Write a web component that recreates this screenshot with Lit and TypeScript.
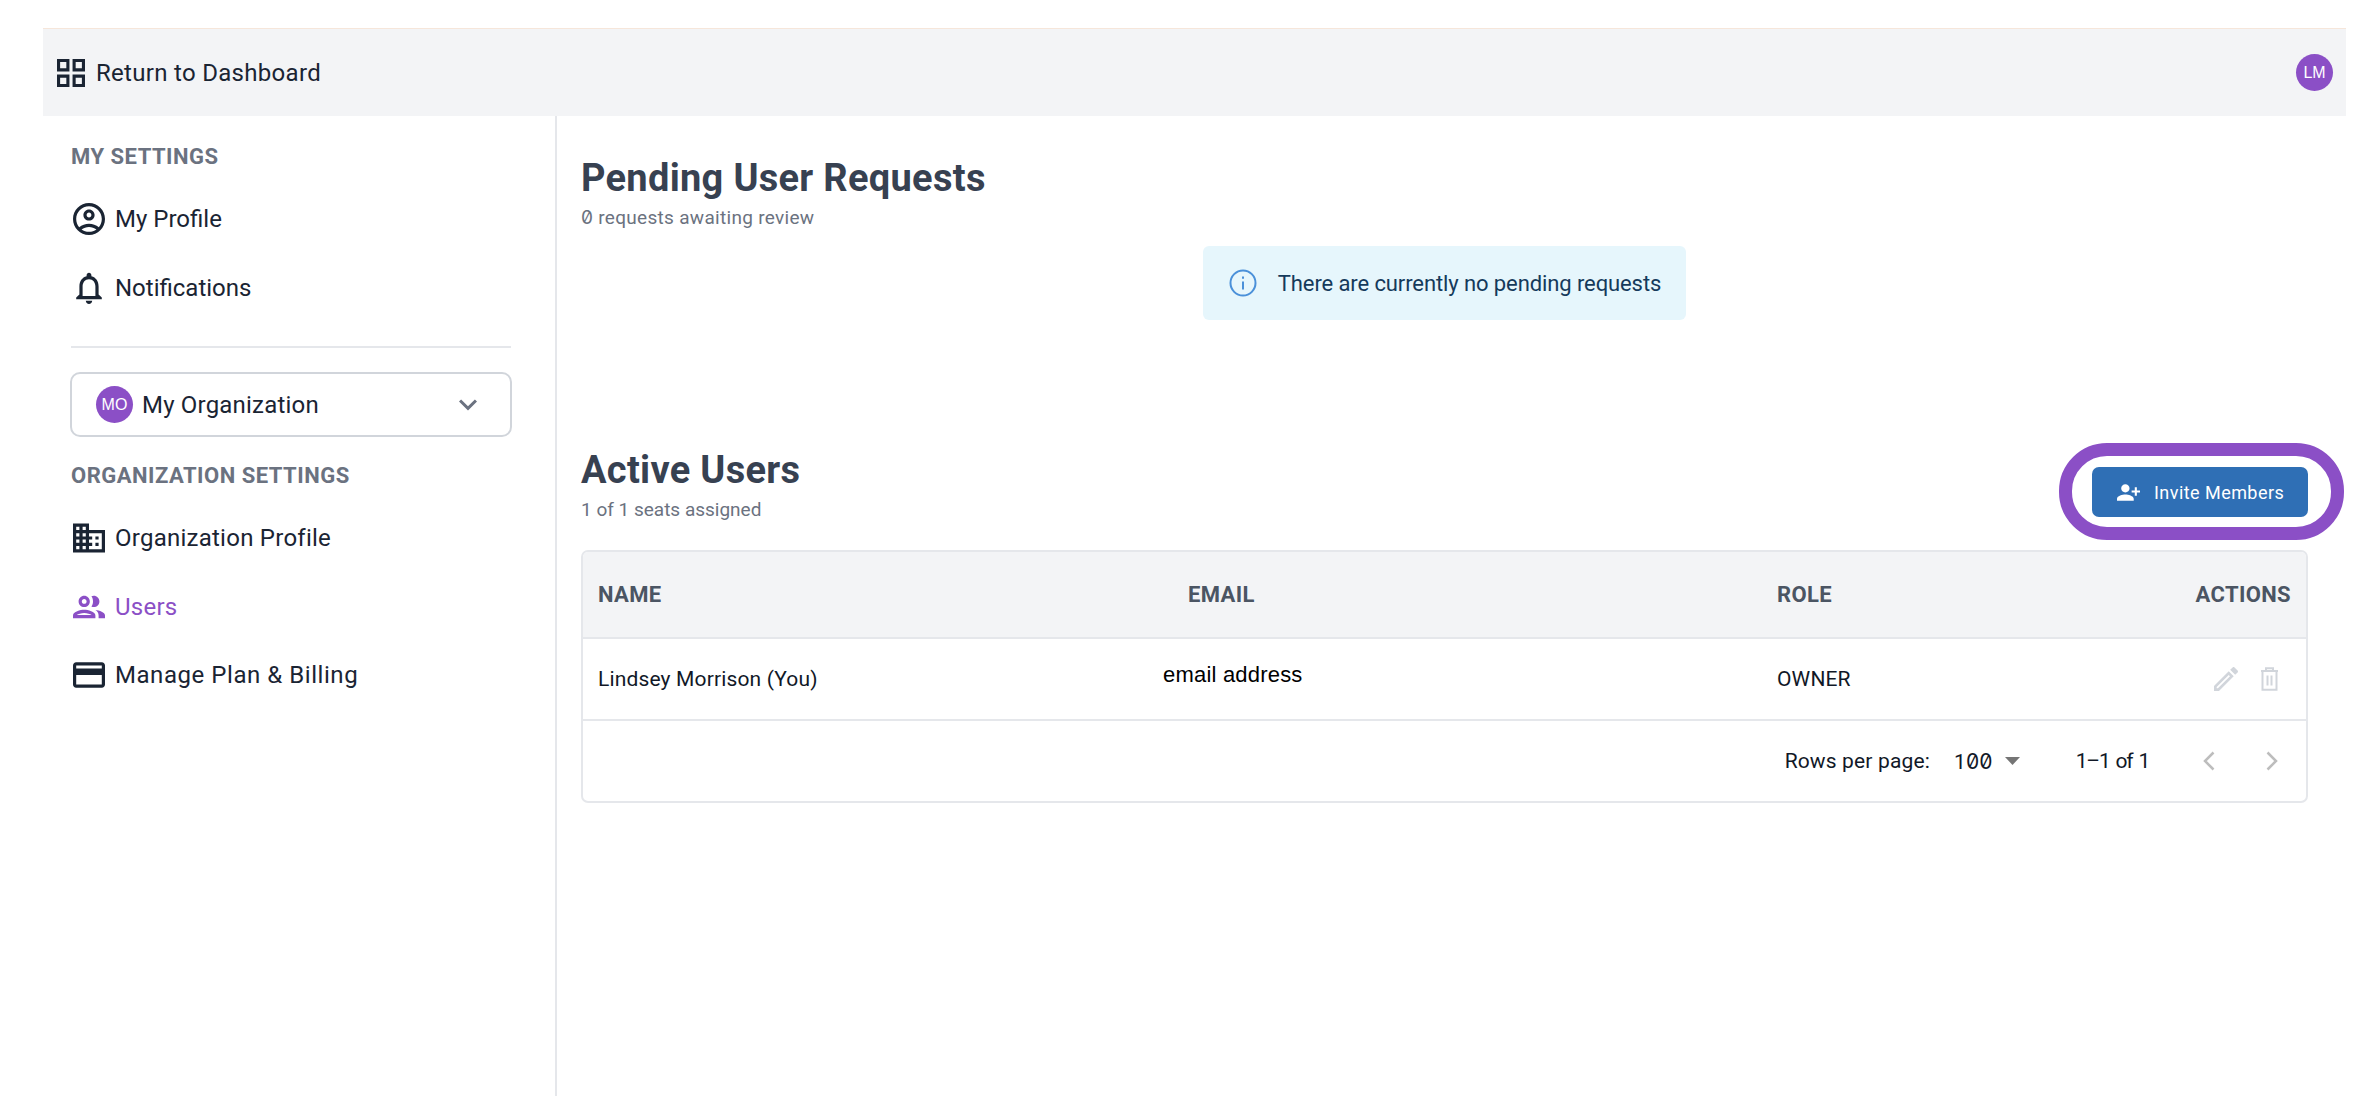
import { LitElement, css, html, svg } from "lit";
import { customElement } from "lit/decorators.js";

const icon = (box: string, d: string, cls = "") =>
  html`<svg class="icon ${cls}" viewBox=${box} fill="currentColor">${svg`<path d=${d}></path>`}</svg>`;

const paths = {
  grid: "M3 3v8h8V3H3zm6 6H5V5h4v4zm-6 4v8h8v-8H3zm6 6H5v-4h4v4zm4-16v8h8V3h-8zm6 6h-4V5h4v4zm-6 4v8h8v-8h-8zm6 6h-4v-4h4v4z",
  profile:
    "M12 2C6.48 2 2 6.48 2 12s4.48 10 10 10 10-4.48 10-10S17.52 2 12 2zM7.35 18.5C8.66 17.56 10.26 17 12 17s3.34.56 4.65 1.5c-1.31.94-2.91 1.5-4.65 1.5s-3.34-.56-4.65-1.5zm10.79-1.38C16.45 15.8 14.32 15 12 15s-4.45.8-6.14 2.12C4.7 15.73 4 13.95 4 12c0-4.42 3.58-8 8-8s8 3.58 8 8c0 1.95-.7 3.73-1.86 5.12zM12 6c-1.93 0-3.5 1.57-3.5 3.5S10.07 13 12 13s3.5-1.57 3.5-3.5S13.93 6 12 6zm0 5c-.83 0-1.5-.67-1.5-1.5S11.17 8 12 8s1.5.67 1.5 1.5S12.83 11 12 11z",
  bell: "M12 22c1.1 0 2-.9 2-2h-4c0 1.1.9 2 2 2zm6-6v-5c0-3.07-1.63-5.64-4.5-6.32V4c0-.83-.67-1.5-1.5-1.5s-1.5.67-1.5 1.5v.68C7.64 5.36 6 7.92 6 11v5l-2 2v1h16v-1l-2-2zm-2 1H8v-6c0-2.48 1.51-4.5 4-4.5s4 2.02 4 4.5v6z",
  domain:
    "M12 7V3H2v18h20V7H12zM6 19H4v-2h2v2zm0-4H4v-2h2v2zm0-4H4V9h2v2zm0-4H4V5h2v2zm4 12H8v-2h2v2zm0-4H8v-2h2v2zm0-4H8V9h2v2zm0-4H8V5h2v2zm10 12h-8v-2h2v-2h-2v-2h2v-2h-2V9h8v10zm-2-8h-2v2h2v-2zm0 4h-2v2h2v-2z",
  people:
    "M9 13.75c-2.34 0-7 1.17-7 3.5V19h14v-1.75c0-2.33-4.66-3.5-7-3.5zM4.34 17c.84-.58 2.87-1.25 4.66-1.25s3.82.67 4.66 1.25H4.34zM9 12c1.93 0 3.5-1.57 3.5-3.5S10.93 5 9 5 5.5 6.57 5.5 8.5 7.07 12 9 12zm0-5c.83 0 1.5.67 1.5 1.5S9.83 10 9 10s-1.5-.67-1.5-1.5S8.17 7 9 7zm7.04 6.81c1.16.84 1.96 1.96 1.96 3.44V19h4v-1.75c0-2.02-3.5-3.17-5.96-3.44zM15 12c1.93 0 3.5-1.57 3.5-3.5S16.93 5 15 5c-.54 0-1.04.13-1.5.35.63.89 1 1.98 1 3.15s-.37 2.26-1 3.15c.46.22.96.35 1.5.35z",
  card: "M20 4H4c-1.11 0-1.99.89-1.99 2L2 18c0 1.11.89 2 2 2h16c1.11 0 2-.89 2-2V6c0-1.11-.89-2-2-2zm0 14H4v-6h16v6zm0-10H4V6h16v2z",
  personAdd:
    "M15 12c2.21 0 4-1.79 4-4s-1.79-4-4-4-4 1.79-4 4 1.79 4 4 4zm-9-2V7H4v3H1v2h3v3h2v-3h3v-2H6zm9 4c-2.67 0-8 1.34-8 4v2h16v-2c0-2.66-5.33-4-8-4z",
  pencil:
    "M14.06 9.02l.92.92L5.92 19H5v-.92l9.06-9.06M17.66 3c-.25 0-.51.1-.7.29l-1.83 1.83 3.75 3.75 1.83-1.83c.39-.39.39-1.02 0-1.41l-2.34-2.34c-.2-.2-.45-.29-.71-.29zm-3.6 3.19L3 17.25V21h3.75L17.81 9.94l-3.75-3.75z",
};

const personal = [
  { label: "My Profile", d: paths.profile, cls: "tight" },
  { label: "Notifications", d: paths.bell, cls: "tight" },
];

const org = [
  { label: "Organization Profile", d: paths.domain, cls: "" },
  { label: "Users", d: paths.people, cls: "active" },
  { label: "Manage Plan & Billing", d: paths.card, cls: "wide" },
];

@customElement("app-root")
export class AppRoot extends LitElement {
  static styles = css`
    :host {
      display: block;
      font-family: Roboto, "Noto Sans", sans-serif;
      color: #1a2433;
    }
    .page {
      display: flex;
      flex-direction: column;
      box-sizing: border-box;
      min-height: 100vh;
      padding: 28px 22px 0 43px;
    }
    .icon {
      display: block;
      flex: none;
    }
    .zero {
      font-family: Inter, sans-serif;
      font-feature-settings: "zero";
    }

    .topbar {
      display: flex;
      align-items: center;
      justify-content: space-between;
      height: 87px;
      padding: 0 13px 0 14px;
      background: #f3f4f6;
      border-top: 1px solid #f6e6da;
    }
    .back {
      display: flex;
      align-items: center;
      gap: 11px;
      font-size: 24px;
      letter-spacing: 0.3px;
    }
    .back .icon {
      width: 28px;
      height: 28px;
    }
    .avatar {
      display: flex;
      align-items: center;
      justify-content: center;
      flex: none;
      width: 37px;
      height: 37px;
      border-radius: 50%;
      background: #8b4fc6;
      color: #fff;
      font: 500 16px "Liberation Sans", sans-serif;
      letter-spacing: 0;
    }

    .content {
      display: flex;
      flex: 1;
    }
    aside {
      box-sizing: border-box;
      flex: none;
      width: 514px;
      padding: 26px 44px 0 28px;
      border-right: 2px solid #e5e7eb;
    }
    .section {
      height: 30px;
      line-height: 30px;
      font-size: 22px;
      font-weight: 700;
      letter-spacing: 0.5px;
      color: #6b7280;
    }
    nav {
      margin-top: 13px;
    }
    .item {
      display: flex;
      align-items: center;
      gap: 10px;
      height: 68.5px;
      padding-left: 2px;
      font-size: 24px;
      letter-spacing: 0.25px;
    }
    .item .icon {
      width: 32px;
      height: 32px;
    }
    .item.tight {
      letter-spacing: 0;
    }
    .item.wide {
      letter-spacing: 0.55px;
    }
    .item.active {
      color: #8b4fc6;
    }
    .divider {
      height: 2px;
      margin-top: 24px;
      background: #e5e7eb;
    }
    .org-select {
      display: flex;
      align-items: center;
      gap: 9px;
      box-sizing: border-box;
      height: 65px;
      margin: 24px -1px;
      padding: 0 33px 0 24px;
      border: 2px solid #d1d5db;
      border-radius: 10px;
      font-size: 24px;
      letter-spacing: 0.2px;
    }
    .org-select span {
      flex: 1;
    }
    .chevron {
      width: 18px;
      height: 12px;
      color: #6b7280;
    }

    main {
      display: flex;
      flex-direction: column;
      flex: 1;
      min-width: 0;
      padding: 40px 38px 0 24px;
    }
    h2 {
      margin: 0;
      font-size: 38px;
      line-height: 44px;
      font-weight: 700;
      letter-spacing: 0.3px;
      color: #374151;
    }
    .sub {
      margin-top: 6px;
      font-size: 19px;
      line-height: 24px;
      color: #6b7280;
    }
    .sub.wide {
      letter-spacing: 0.3px;
    }
    .notice {
      display: flex;
      align-items: center;
      gap: 21px;
      align-self: center;
      box-sizing: border-box;
      height: 74px;
      margin-top: 16px;
      padding: 0 25px 0 26px;
      border-radius: 6px;
      background: #e6f6fc;
      font-size: 22px;
      letter-spacing: -0.1px;
      color: #153a5b;
    }
    .notice .icon {
      width: 28px;
      height: 28px;
      fill: none;
      stroke: #4a90d9;
      stroke-width: 2;
    }
    .users-head {
      display: flex;
      align-items: flex-start;
      justify-content: space-between;
      margin-top: 128px;
    }
    .invite-wrap {
      position: relative;
      margin-top: 19px;
    }
    .invite {
      display: flex;
      align-items: center;
      gap: 14px;
      box-sizing: border-box;
      width: 216px;
      height: 50px;
      padding: 0 0 0 25px;
      border: none;
      border-radius: 7px;
      background: #2f6fb5;
      color: #fff;
      font: 400 18px Roboto, sans-serif;
      letter-spacing: 0.45px;
    }
    .invite .icon {
      width: 23px;
      height: 17px;
    }
    .ring {
      position: absolute;
      top: -24px;
      right: -36px;
      bottom: -23px;
      left: -33px;
      border: 13px solid #8b4fc6;
      border-radius: 48px;
    }

    .table {
      margin-top: 28px;
      border: 2px solid #e5e7eb;
      border-radius: 7px;
      overflow: hidden;
    }
    .row {
      display: grid;
      grid-template-columns: 590px 589px 1fr auto;
      align-items: center;
      padding: 0 15px;
      border-bottom: 2px solid #e5e7eb;
    }
    .row.head {
      height: 85px;
      background: #f3f4f6;
      font-size: 22px;
      font-weight: 700;
      letter-spacing: 0.35px;
      color: #4b5563;
    }
    .row.body {
      height: 80px;
      font-size: 21px;
      letter-spacing: 0.15px;
      color: #111827;
    }
    .email {
      margin-left: -25px;
      padding-bottom: 8px;
      font: 22px "Liberation Sans", sans-serif;
      letter-spacing: 0.2px;
      color: #000;
    }
    .actions {
      display: flex;
      align-items: center;
      gap: 22px;
      padding-right: 12px;
      color: #d1d5db;
    }
    .actions .pencil {
      width: 24px;
      height: 24px;
    }
    .actions .trash {
      width: 19px;
      height: 24px;
      fill: none;
      stroke: currentColor;
      stroke-width: 2;
    }
    .pager {
      display: flex;
      align-items: center;
      justify-content: flex-end;
      height: 80px;
      padding-right: 28px;
      font-size: 21px;
      letter-spacing: 0.15px;
      color: #111827;
    }
    .rows-value {
      margin-left: 24px;
    }
    .caret {
      width: 15px;
      height: 8px;
      margin-left: 12px;
      fill: #757575;
    }
    .range {
      margin-left: 56px;
      letter-spacing: -1.2px;
      word-spacing: 2px;
    }
    .page-btn {
      width: 12px;
      height: 20px;
      margin-left: 54px;
      fill: none;
      stroke: #bdbdbd;
      stroke-width: 2.5;
    }
    .page-btn.next {
      margin-left: 51px;
    }
  `;

  render() {
    return html`
      <div class="page">
        <header class="topbar">
          <div class="back">${icon("3 3 18 18", paths.grid)}Return to Dashboard</div>
          <div class="avatar">LM</div>
        </header>
        <div class="content">
          <aside>
            <div class="section">MY SETTINGS</div>
            <nav>${personal.map((i) => this.renderItem(i))}</nav>
            <div class="divider"></div>
            <div class="org-select">
              <div class="avatar">MO</div>
              <span>My Organization</span>
              ${icon("6 8.59 12 7.41", "M16.59 8.59 12 13.17 7.41 8.59 6 10l6 6 6-6z", "chevron")}
            </div>
            <div class="section">ORGANIZATION SETTINGS</div>
            <nav>${org.map((i) => this.renderItem(i))}</nav>
          </aside>
          <main>
            <h2>Pending User Requests</h2>
            <div class="sub wide"><span class="zero">0</span> requests awaiting review</div>
            <div class="notice">
              <svg class="icon" viewBox="0 0 28 28">
                <circle cx="14" cy="14" r="12.5"></circle>
                <path d="M14 12.5v8M14 7.5v2.2"></path>
              </svg>
              There are currently no pending requests
            </div>
            <div class="users-head">
              <div>
                <h2>Active Users</h2>
                <div class="sub">1 of 1 seats assigned</div>
              </div>
              <div class="invite-wrap">
                <button class="invite">
                  <svg class="icon" viewBox="1 4 22 16" fill="currentColor">
                    <path transform="matrix(-1 0 0 1 24 0)" d=${paths.personAdd}></path>
                  </svg>
                  Invite Members
                </button>
                <div class="ring"></div>
              </div>
            </div>
            <div class="table">
              <div class="row head">
                <div>NAME</div>
                <div>EMAIL</div>
                <div>ROLE</div>
                <div>ACTIONS</div>
              </div>
              <div class="row body">
                <div>Lindsey Morrison (You)</div>
                <div class="email">email address</div>
                <div>OWNER</div>
                <div class="actions">
                  ${icon("3 3 18 18", paths.pencil, "pencil")}
                  <svg class="icon trash" viewBox="0 0 19 24">
                    <path d="M1 4h17M6 4V1.2h7V4M2.5 4v18.8h14V4M7.5 8.5v10M11.5 8.5v10"></path>
                  </svg>
                </div>
              </div>
              <div class="pager">
                <span>Rows per page:</span>
                <span class="rows-value">1<span class="zero">00</span></span>
                <svg class="icon caret" viewBox="0 0 15 8"><path d="M0 0h15L7.5 8z"></path></svg>
                <span class="range">1–1 of 1</span>
                <svg class="icon page-btn" viewBox="0 0 12 20"><path d="M10.5 1.5 2 10l8.5 8.5"></path></svg>
                <svg class="icon page-btn next" viewBox="0 0 12 20"><path d="M1.5 1.5 10 10l-8.5 8.5"></path></svg>
              </div>
            </div>
          </main>
        </div>
      </div>
    `;
  }

  private renderItem(item: { label: string; d: string; cls: string }) {
    return html`<div class="item ${item.cls}">
      ${icon("2 2 20 20", item.d)}${item.label}
    </div>`;
  }
}
